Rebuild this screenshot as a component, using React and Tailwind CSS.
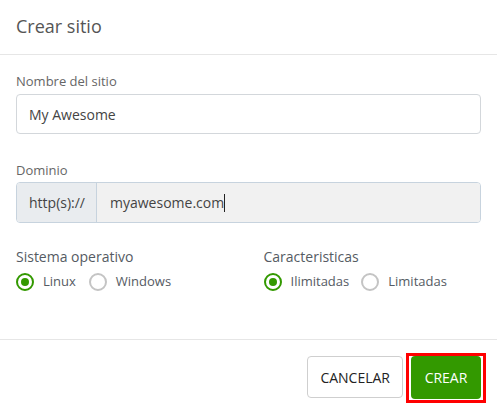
import React, { useState } from 'react'

const Radio = ({ checked, label, onClick }) => (
    <label className='flex items-center cursor-pointer' onClick={onClick}>
        <span className={`flex items-center justify-center w-[18px] h-[18px] rounded-full border-[2.5px] ${checked ? 'border-[#339900]' : 'border-[#c4c4c4]'}`}>
            {checked && <span className='w-[8px] h-[8px] rounded-full bg-[#339900]'></span>}
        </span>
        <span className='ml-[9px] text-[13px] text-[#555b63]'>{label}</span>
    </label>
)

const App = () => {
    const [so, setSo] = useState('linux')
    const [car, setCar] = useState('ilimitadas')

    return (
        <div className="w-[497px] h-[411px] bg-white flex flex-col font-['Open_Sans',sans-serif]">
            <div className='h-[55px] flex items-center px-4 border-b border-[#e6e6e6]'>
                <h3 className='text-[18px] text-[#555] pb-[1px]'>Crear sitio</h3>
            </div>

            <div className='flex-1 px-4 pt-[17px]'>
                <label className='block text-[13px] text-[#666] leading-[18px]'>Nombre del sitio</label>
                <div className='mt-[4px] h-[40px] flex items-center px-[12px] border border-[#d3d7db] rounded-[4px] text-[14px] text-[#444]'>
                    My Awesome
                </div>

                <label className='block mt-[27px] text-[13px] text-[#666] leading-[18px]'>Dominio</label>
                <div className='mt-[3px] h-[41px] flex border border-[#c7d3de] rounded-[4px] overflow-hidden text-[14px] text-[#444]'>
                    <div className='w-[80px] flex items-center pl-[12px] bg-[#e9ecef] border-r border-[#c7d3de]'>http(s)://</div>
                    <div className='flex-1 flex items-center pl-[13px] bg-[#f1f1f1]'>
                        myawesome.com<span className='inline-block w-[1px] h-[18px] bg-[#222]'></span>
                    </div>
                </div>

                <div className='mt-[24px] grid grid-cols-2 gap-[30px]'>
                    <div>
                        <div className='text-[14px] text-[#555b63] leading-[20px]'>Sistema operativo</div>
                        <div className='mt-[5px] flex items-center gap-[13px]'>
                            <Radio checked={so === 'linux'} label='Linux' onClick={() => setSo('linux')} />
                            <Radio checked={so === 'windows'} label='Windows' onClick={() => setSo('windows')} />
                        </div>
                    </div>
                    <div>
                        <div className='text-[14px] text-[#555b63] leading-[20px]'>Caracteristicas</div>
                        <div className='mt-[5px] flex items-center gap-[12px]'>
                            <Radio checked={car === 'ilimitadas'} label='Ilimitadas' onClick={() => setCar('ilimitadas')} />
                            <Radio checked={car === 'limitadas'} label='Limitadas' onClick={() => setCar('limitadas')} />
                        </div>
                    </div>
                </div>
            </div>

            <div className='h-[72px] border-t border-[#e6e6e6] flex items-start justify-end pr-[11px] pt-[13px]'>
                <button className='h-[42px] px-[12px] border border-[#cfcfcf] rounded-[4px] bg-white text-[14px] text-[#222] mt-[3px]'>CANCELAR</button>
                <div className='ml-[3px] px-[2px] pb-[1px] border-[3px] border-[#ff0000]'>
                    <button className='h-[43px] w-[70px] rounded-[4px] bg-[#339900] text-[14px] text-white'>CREAR</button>
                </div>
            </div>
        </div>
    )
}

export default App
